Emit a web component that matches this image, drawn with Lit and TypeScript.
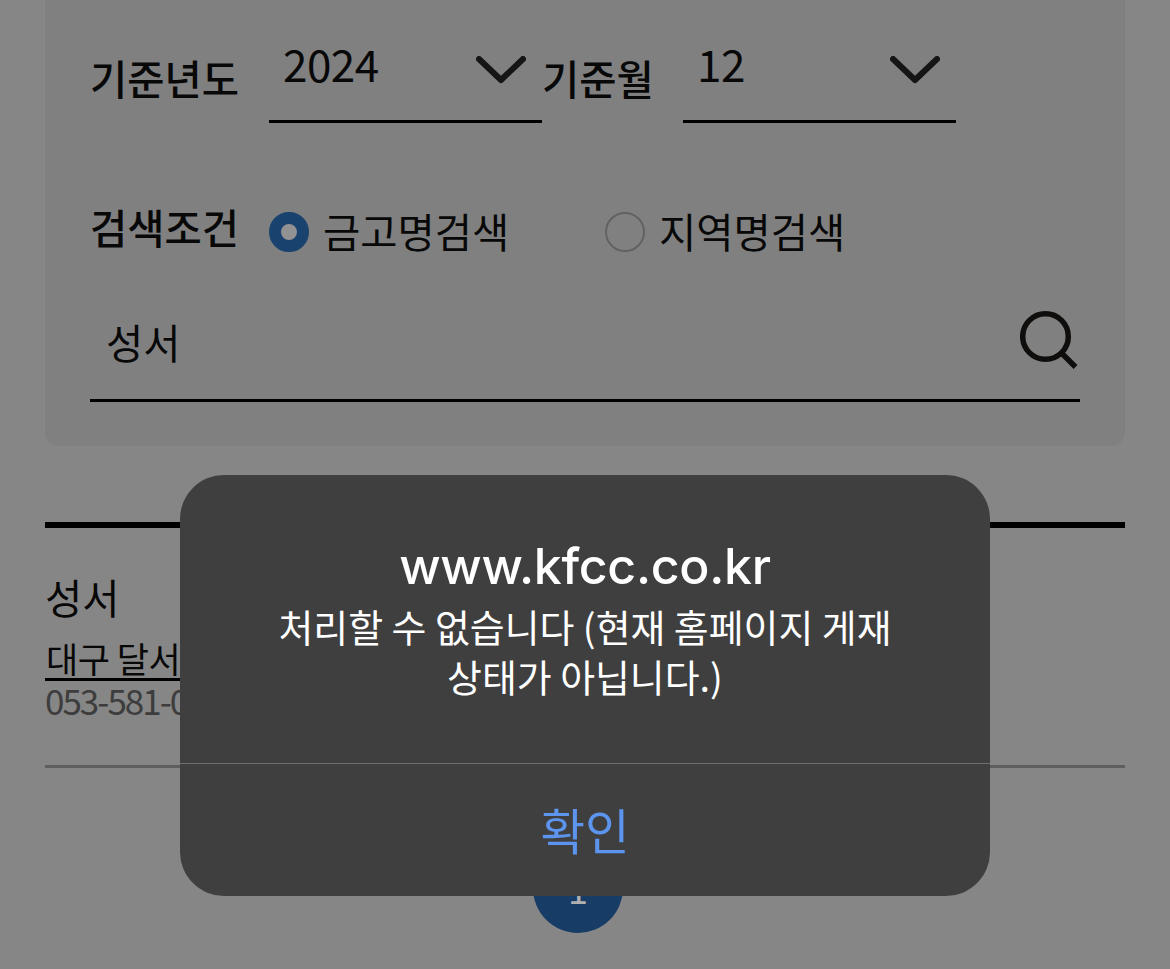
import { LitElement, html, css } from "lit";
import { customElement } from "lit/decorators.js";

@customElement("app-root")
export class AppRoot extends LitElement {
  static styles = css`
    :host {
      display: block;
      position: relative;
      width: 1170px;
      height: 969px;
      overflow: hidden;
      background: #868686;
      color: #080808;
      font-family: "Noto Sans CJK KR", "Noto Sans", sans-serif;
    }
    .page { padding: 0 45px; }
    .card {
      box-sizing: border-box;
      height: 446px;
      background: #808080;
      border-radius: 0 0 14px 14px;
      padding: 0 45px 43px;
      display: flex;
      flex-direction: column;
    }
    .row1 { display: flex; height: 123px; }
    .label {
      font-size: 40.5px;
      line-height: 50px;
      font-weight: 500;
      white-space: nowrap;
    }
    .row1 .label { margin-top: 53px; }
    .first { width: 179px; flex: none; }
    .month-label { width: 141px; flex: none; }
    .select {
      box-sizing: border-box;
      width: 273px;
      flex: none;
      height: 123px;
      border-bottom: 3px solid #000;
      padding: 34px 0 0 14px;
      display: flex;
      justify-content: space-between;
      font-size: 44px;
      line-height: 58px;
      font-weight: 400;
      letter-spacing: -0.5px;
    }
    .select svg { margin: 22px 16px 0 0; }
    .row2 { display: flex; margin-top: 79px; height: 50px; }
    .radio {
      display: flex;
      align-items: center;
      gap: 14px;
      font-size: 40.5px;
      line-height: 50px;
      font-weight: 400;
      margin-top: 7px;
      width: 336px;
      flex: none;
      white-space: nowrap;
    }
    .dot {
      box-sizing: border-box;
      width: 40px;
      height: 40px;
      border-radius: 50%;
      flex: none;
      margin-top: 2px;
    }
    .dot.on { border: 12px solid #19436e; background: #929292; }
    .dot.off { border: 2px solid #626262; }
    .search {
      box-sizing: border-box;
      margin-top: 55px;
      height: 95px;
      flex: none;
      border-bottom: 3px solid #000;
      display: flex;
      justify-content: space-between;
      align-items: flex-start;
      padding: 0 0 0 16px;
    }
    .search span { font-size: 40.5px; line-height: 50px; font-weight: 400; margin-top: 10px; }
    .search svg { margin-top: 2px; }
    .result { margin-top: 76px; border-top: 6px solid #000; height: 246px; box-sizing: border-box; border-bottom: 3px solid #5e5e5e; padding-top: 42px; }
    .name { font-size: 40.5px; line-height: 54px; font-weight: 400; }
    .addr {
      display: block;
      font-size: 35px;
      line-height: 40px;
      font-weight: 400;
      width: 420px;
      border-bottom: 3px solid #000;
      padding-left: 1px;
      white-space: nowrap;
      box-sizing: border-box;
      height: 43px;
      margin-top: 14px;
      letter-spacing: -0.5px;
    }
    .tel { font-size: 35px; line-height: 34px; margin-top: 2px; font-weight: 400; color: #3d3d3d; letter-spacing: -2px; }
    .pager { display: flex; justify-content: center; margin-top: 75px; padding-right: 14px; }
    .circle {
      width: 90px;
      height: 90px;
      border-radius: 50%;
      background: #173c66;
      color: #b0b0b0;
      font-size: 36px;
      font-weight: 400;
      display: flex;
      align-items: center;
      justify-content: center;
    }
    .dialog {
      position: absolute;
      left: 180px;
      top: 475px;
      width: 810px;
      height: 421px;
      border-radius: 44px;
      background: #3f3f3f;
      color: #fff;
      text-align: center;
      display: flex;
      flex-direction: column;
    }
    .body { height: 288px; box-sizing: border-box; padding-top: 59px; }
    .title { font-family: Inter, "Noto Sans", sans-serif; font-size: 50px; line-height: 64px; font-weight: 500; letter-spacing: -0.3px; }
    .msg { font-size: 37.9px; line-height: 50px; font-weight: 400; margin-top: 3px; padding: 0 40px; white-space: nowrap; }
    .btn {
      border-top: 1px solid #6f6f6f;
      flex: 1;
      color: #5c94ee;
      font-size: 48.5px;
      font-weight: 400;
      line-height: 130px;
    }
  `;

  render() {
    return html`
      <div class="page">
        <div class="card">
          <div class="row1">
            <div class="label first">기준년도</div>
            <div class="select"><span>2024</span>${this.chevron()}</div>
            <div class="label month-label">기준월</div>
            <div class="select"><span>12</span>${this.chevron()}</div>
          </div>
          <div class="row2">
            <div class="label first">검색조건</div>
            <div class="radio"><span class="dot on"></span>금고명검색</div>
            <div class="radio"><span class="dot off"></span>지역명검색</div>
          </div>
          <div class="search">
            <span>성서</span>
            <svg width="60" height="60" viewBox="0 0 60 60" fill="none" stroke="#0f0e0d" stroke-width="5.5">
              <circle cx="25.5" cy="27.5" r="22.8"></circle>
              <path d="M41.5 44 L55.5 58"></path>
            </svg>
          </div>
        </div>
        <div class="result">
          <div class="name">성서</div>
          <div class="addr">대구 달서구</div>
          <div class="tel">053-581-0000</div>
        </div>
        <div class="pager"><div class="circle">1</div></div>
      </div>
      <div class="dialog">
        <div class="body">
          <div class="title">www.kfcc.co.kr</div>
          <div class="msg">처리할 수 없습니다 (현재 홈페이지 게재<br />상태가 아닙니다.)</div>
        </div>
        <div class="btn">확인</div>
      </div>
    `;
  }

  chevron() {
    return html`<svg width="50" height="30" viewBox="0 0 50 30" fill="none" stroke="#151515" stroke-width="6" stroke-linecap="round" stroke-linejoin="round">
      <path d="M3 3 L25 24 L47 3"></path>
    </svg>`;
  }
}
